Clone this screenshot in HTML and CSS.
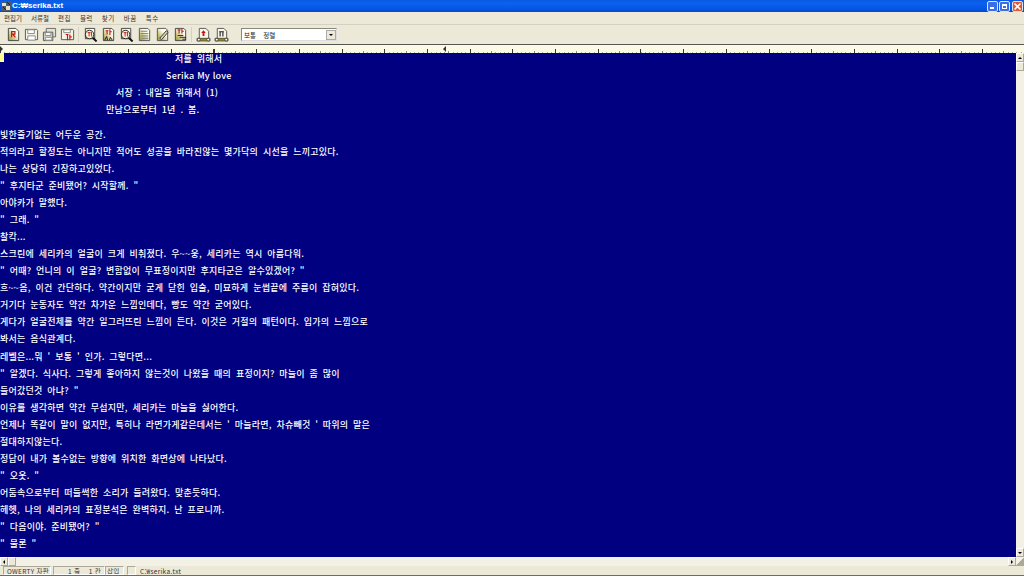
FILE: index.html
```html
<!DOCTYPE html>
<html lang="ko">
<head>
<meta charset="utf-8">
<title>C:\serika.txt</title>
<link rel="stylesheet" href="styles.css">
</head>
<body>
<div class="window">
  <header class="titlebar">
    <svg class="appicon" width="10" height="10" viewBox="0 0 10 10"><rect width="10" height="10" fill="#4a5a70"/><path d="M1 2h4v3H1zM5 5h4v4H5z" fill="#e8e0c8"/><path d="M2 6l3 3M6 1l3 3" stroke="#222" fill="none"/></svg>
    <span class="title">C:₩serika.txt</span>
    <div class="winbtns">
      <span class="wb"><i class="min"></i></span>
      <span class="wb"><i class="rest"></i></span>
      <span class="wb close"><svg width="9" height="9" viewBox="0 0 9 9"><path d="M1.500 1.500l6 6M7.500 1.500l-6 6" stroke="#fff" stroke-width="1.600"/></svg></span>
    </div>
  </header>
  <nav class="menubar">
    <span>편집기</span><span>서류철</span><span class="w2">편집</span><span class="w2">블럭</span><span class="w2">찾기</span><span class="w2">바꿈</span><span class="w2">특수</span>
  </nav>
  <div class="toolbar">
    <div class="tgroup">
      <svg class="ic" viewBox="0 0 16 16"><defs><linearGradient id="ol" x1="1" y1="0" x2="0" y2="1"><stop offset=".35" stop-color="#fdfcec"/><stop offset="1" stop-color="#98901c"/></linearGradient></defs><path d="M2.500 1.500h8l3 3v10h-11z" fill="url(#ol)" stroke="#444"/><path d="M6 5h3.500v2.500H6zM6 11V5M7.500 8l2.500 3" stroke="#c01818" stroke-width="1.300" fill="none"/></svg>
      <svg class="ic" viewBox="0 0 16 16"><path d="M1.500 2.500h12l1 1v10h-13z" fill="#f4f2e4" stroke="#555"/><path d="M4 3h7v4H4zM4 9.500h8V14H4z" fill="#fff" stroke="#888"/></svg>
      <svg class="ic" viewBox="0 0 16 16"><path d="M4.500 1.500h10v9h-10z" fill="#e4e2d4" stroke="#666"/><path d="M1.500 5.500h10v9h-10z" fill="#d8d6c4" stroke="#555"/><path d="M3.500 6h6v3h-6zM3.500 11h7v3h-7z" fill="#fff" stroke="#888"/></svg>
      <svg class="ic" viewBox="0 0 16 16"><path d="M1.500 2.500h12l1 1v10h-13z" fill="#f4f2e4" stroke="#555"/><path d="M4 3h7v3H4z" fill="#fff" stroke="#888"/><path d="M6 8h3M8 8v6M10.500 8v6M10.500 10.500h2" stroke="#c01818" stroke-width="1.200" fill="none"/></svg>
    </div>
    <i class="sep"></i>
    <div class="tgroup">
      <svg class="ic" viewBox="0 0 16 16"><path d="M2.500 1.500h10v11h-10z" fill="url(#ol)" stroke="#444"/><circle cx="7" cy="8" r="4.500" fill="#f5f0d8" stroke="#222"/><path d="M10.500 11.500l4 4" stroke="#111" stroke-width="2"/><path d="M5 6h3M6.500 6v4M9 5v5" stroke="#c01818"/></svg>
      <svg class="ic" viewBox="0 0 16 16"><path d="M2.500 1.500h9l2 2v11h-11z" fill="url(#ol)" stroke="#444"/><path d="M5 4h3M6.500 4v4M9.500 2.500v6M9.500 5h2" stroke="#c01818" stroke-width="1.200" fill="none"/><path d="M4 14l2-4 1 4M9 14l1-3 2 3" stroke="#222" fill="none"/></svg>
      <svg class="ic" viewBox="0 0 16 16"><path d="M2.500 1.500h10v11h-10z" fill="url(#ol)" stroke="#444"/><circle cx="7" cy="8" r="4.500" fill="#f5e8d8" stroke="#222"/><path d="M10.500 11.500l4 4" stroke="#111" stroke-width="2"/><path d="M5 6h3M6.500 6v4M9 5v5" stroke="#c01818"/></svg>
      <svg class="ic" viewBox="0 0 16 16"><path d="M2.500 1.500h9l2 2v11h-11z" fill="url(#ol)" stroke="#555"/><path d="M4 4.500h7M4 7h8M4 9.500h8M5 12h7" stroke="#777"/></svg>
      <svg class="ic" viewBox="0 0 16 16"><path d="M2.500 1.500h9l2 2v11h-11z" fill="url(#ol)" stroke="#555"/><path d="M5 12l7-8 2 1.500-7 8z" fill="#d8d4b8" stroke="#333"/></svg>
      <svg class="ic" viewBox="0 0 16 16"><path d="M2.500 1.500h9l2 2v11h-11z" fill="url(#ol)" stroke="#444"/><path d="M5 3h3M6.500 3v4M9.500 2v5M9.500 4.500h2" stroke="#c01818" stroke-width="1.200" fill="none"/><path d="M5 9h6M7 11h7M10 13h4" stroke="#222"/></svg>
    </div>
    <i class="sep"></i>
    <div class="tgroup">
      <svg class="ic" viewBox="0 0 16 16"><path d="M3.500 1.500h7l3 3v8h-10z" fill="#f8f6e8" stroke="#555"/><path d="M1 12h14v3H1z" fill="#8f8a28" stroke="#333" stroke-width=".6"/><circle cx="13" cy="13.500" r="1.500" fill="#fff" stroke="#444"/><circle cx="3" cy="13.500" r="1.500" fill="#fff" stroke="#444"/><path d="M8 3.500L5.500 6.500h1.500v3h2v-3h1.500z" fill="#c01818"/></svg>
      <svg class="ic" viewBox="0 0 16 16"><path d="M3.500 1.500h7l3 3v8h-10z" fill="#f8f6e8" stroke="#555"/><path d="M1 12h14v3H1z" fill="#8f8a28" stroke="#333" stroke-width=".6"/><circle cx="13" cy="13.500" r="1.500" fill="#fff" stroke="#444"/><circle cx="3" cy="13.500" r="1.500" fill="#fff" stroke="#444"/><path d="M5.500 5h5M6.500 5v5M9.500 5v5" stroke="#222" stroke-width="1.200" fill="none"/></svg>
    </div>
    <div class="combo"><span>보통&nbsp;&nbsp;&nbsp;&nbsp;정렬</span><b class="arrowbtn"><i class="down"></i></b></div>
  </div>
  <div class="ruler"><span class="mark" aria-hidden="true"></span><span class="margin" aria-hidden="true"></span></div>
  <div class="middle">
    <main class="doc">
      <span class="caret"></span>
      <p class="c1">저를 위해서</p>
      <p class="c2">Serika My love</p>
      <p class="c3">서장 : 내일을 위해서 (1)</p>
      <p class="c4">만남으로부터 1년 . 봄.</p>
      <p>빛한줄기없는 어두운 공간.</p>
      <p>적의라고 할정도는 아니지만 적어도 성공을 바라진않는 몇가닥의 시선을 느끼고있다.</p>
      <p>나는 상당히 긴장하고있었다.</p>
      <p>" 후지타군 준비됐어? 시작할께. "</p>
      <p>아야카가 말했다.</p>
      <p>" 그래. "</p>
      <p>찰칵...</p>
      <p>스크린에 세리카의 얼굴이 크게 비춰졌다. 우~~웅, 세리카는 역시 아름다워.</p>
      <p>" 어때? 언니의 이 얼굴? 변함없이 무표정이지만 후지타군은 알수있겠어? "</p>
      <p>흐~~음, 이건 간단하다. 약간이지만 굳게 닫힌 입술, 미묘하게 눈썹끝에 주름이 잡혀있다.</p>
      <p>거기다 눈동자도 약간 차가운 느낌인데다, 빵도 약간 굳어있다.</p>
      <p>게다가 얼굴전체를 약간 일그러뜨린 느낌이 든다. 이것은 거절의 패턴이다. 입가의 느낌으로</p>
      <p>봐서는 음식관계다.</p>
      <p>레벨은...뭐 ' 보통 ' 인가. 그렇다면...</p>
      <p>" 알겠다. 식사다. 그렇게 좋아하지 않는것이 나왔을 때의 표정이지? 마늘이 좀 많이</p>
      <p>들어갔던것 아냐? "</p>
      <p>이유를 생각하면 약간 무섭지만, 세리카는 마늘을 싫어한다.</p>
      <p>언제나 똑같이 말이 없지만, 특히나 라면가게같은데서는 ' 마늘라면, 차슈빼것 ' 따위의 말은</p>
      <p>절대하지않는다.</p>
      <p>정답이 내가 볼수없는 방향에 위치한 화면상에 나타났다.</p>
      <p>" 오옷. "</p>
      <p>어둠속으로부터 떠들썩한 소리가 들려왔다. 맞춘듯하다.</p>
      <p>헤헷, 나의 세리카의 표정분석은 완벽하지. 난 프로니까.</p>
      <p>" 다음이야. 준비됐어? "</p>
      <p>" 물론 "</p>
    </main>
    <aside class="vscroll">
      <b class="sbtn"><i class="up"></i></b>
      <b class="sbtn thumb"></b>
      <span class="track"></span>
      <b class="sbtn"><i class="down"></i></b>
    </aside>
  </div>
  <div class="hscroll">
    <b class="sbtn"><i class="left"></i></b>
    <b class="sbtn"></b>
    <span class="track"></span>
    <b class="sbtn"><i class="right"></i></b>
    <span class="corner"></span>
  </div>
  <footer class="status">
    <span class="s1">QWERTY 자판</span>
    <span class="s2">1 줄&nbsp;&nbsp;&nbsp;&nbsp;1 칸</span>
    <span class="s2b">삽입</span>
    <span class="s3"></span>
    <span class="s4">C:₩serika.txt</span>
  </footer>
  <div class="taskstrip"></div>
</div>
</body>
</html>
```
FILE: styles.css
```css
* { box-sizing: border-box; }
html, body { margin: 0; padding: 0; width: 1024px; height: 576px; overflow: hidden; }
body { font-family: "Noto Sans CJK KR", "Noto Sans", sans-serif; background: #ece9d8; }
.window { width: 1024px; height: 576px; display: flex; flex-direction: column; }

.titlebar { height: 12px; flex: none; display: flex; align-items: center; padding-left: 1px; color: #fff;
  background: linear-gradient(#0a5ae0, #0a62f0 30%, #0556e4 70%, #0449d0); }
.appicon { flex: none; margin-right: 1px; }
.title { font: bold 8px/12px "Liberation Sans", "Noto Sans CJK KR", sans-serif; }
.winbtns { margin-left: auto; display: flex; gap: 1px; padding-right: 1px; }
.wb { width: 11px; height: 11px; border: 1px solid #d8e4f8; border-radius: 2px; background: #3a6ee8; display: flex; align-items: center; justify-content: center; }
.wb.close { background: #e2562e; margin-left: 1px; }
.min { width: 4px; height: 2px; background: #fff; margin-top: 4px; margin-right: 2px; }
.rest { width: 5px; height: 5px; border: 1px solid #fff; border-top-width: 2px; }

.menubar { height: 13px; flex: none; display: flex; gap: 9px; padding: 0 4px; align-items: center; background: #ece9d8;
  border-bottom: 1px solid #d4d0c4; font-size: 6.500px; line-height: 12px; color: #333; }
.menubar .w2 { letter-spacing: 0.500px; }

.toolbar { height: 19px; flex: none; display: flex; align-items: center; padding-left: 6px; background: #ece9d8; }
.tgroup { display: flex; gap: 3px; }
.ic { width: 15px; height: 15px; display: block; }
.sep { width: 1px; height: 15px; background: #d4d0c4; margin: 0 4px 0 3px; }
.combo { width: 96px; height: 13px; margin-left: 12px; background: #fff; border: 1px solid #8a8878; border-right-color: #ddd; border-bottom-color: #ddd;
  display: flex; align-items: center; justify-content: space-between; font-size: 6.500px; padding-left: 2px; color: #222; }
.arrowbtn { width: 10px; height: 10px; background: #ece9d8; border: 1px solid #aaa; display: flex; align-items: center; justify-content: center; }

.ruler { height: 9px; flex: none; border-top: 1px solid #555; background-color: #fbfae4; position: relative;
  background-image:
    repeating-linear-gradient(90deg, #333 0 1px, transparent 1px 42.700px),
    repeating-linear-gradient(90deg, #888 0 1px, transparent 1px 21.350px),
    repeating-linear-gradient(90deg, #aaa 0 1px, transparent 1px 4.270px);
  background-size: 100% 4px, 100% 2px, 100% 1px;
  background-position: 0 bottom, 0 bottom, 0 bottom;
  background-repeat: no-repeat; }
.mark { position: absolute; left: 0; top: 1px; border: 3px solid transparent; border-left: 3px solid #333; }
.margin { position: absolute; left: 440px; top: 1px; border: 3px solid transparent; border-right: 3px solid #333; }

.middle { flex: 1; min-height: 0; display: flex; }
.doc { flex: 1; min-width: 0; background: #000080; color: #fff; position: relative; overflow: hidden; }
.doc p { margin: 0; height: 17.040px; font-size: 9px; font-weight: 500; line-height: 11px; letter-spacing: 0.220px; word-spacing: 2.030px; white-space: nowrap; }
.caret { position: absolute; left: 0; top: 0; width: 4px; height: 9px; background: #ffff90; }
.doc .c1 { padding-left: 175px; }
.doc .c2 { padding-left: 166px; word-spacing: 0; }
.doc .c3 { padding-left: 116px; }
.doc .c4 { padding-left: 106px; height: 25px; }

.vscroll { width: 8px; flex: none; display: flex; flex-direction: column; background: #f3f1e6; }
.hscroll { height: 9px; flex: none; display: flex; background: #f3f1e6; }
.track { flex: 1; }
.sbtn { width: 8px; height: 9px; flex: none; background: #ece9d8; border: 1px solid #fff; border-right-color: #aca899; border-bottom-color: #aca899; display: flex; align-items: center; justify-content: center; }
.corner { width: 8px; flex: none; background: linear-gradient(135deg, #f3f1e6 50%, #aca899 50%); }
.up, .down, .left, .right { width: 0; height: 0; border: 2px solid transparent; display: block; }
.up { border-top: 0; border-bottom-color: #000; }
.down { border-bottom: 0; border-top-color: #000; }
.left { border-left: 0; border-right-color: #000; }
.right { border-right: 0; border-left-color: #000; }

.status { height: 9px; flex: none; display: flex; background: #ece9d8; font-size: 6.500px; line-height: 8px; letter-spacing: 0.300px; color: #333; padding-left: 3px; }
.status span { border: 1px solid #fff; border-top-color: #aca899; border-left-color: #aca899; white-space: nowrap; overflow: hidden; }
.s1 { width: 48px; margin-right: 2px; padding-left: 3px; }
.s2 { width: 52px; padding-left: 14px; }
.s2b { width: 19px; padding-left: 1px; }
.s3 { width: 9px; margin-left: 3px; }
.status .s4 { padding-left: 3px; width: 110px; border-color: transparent; }
.taskstrip { height: 1px; flex: none; background: #3a6ee8; }
```
